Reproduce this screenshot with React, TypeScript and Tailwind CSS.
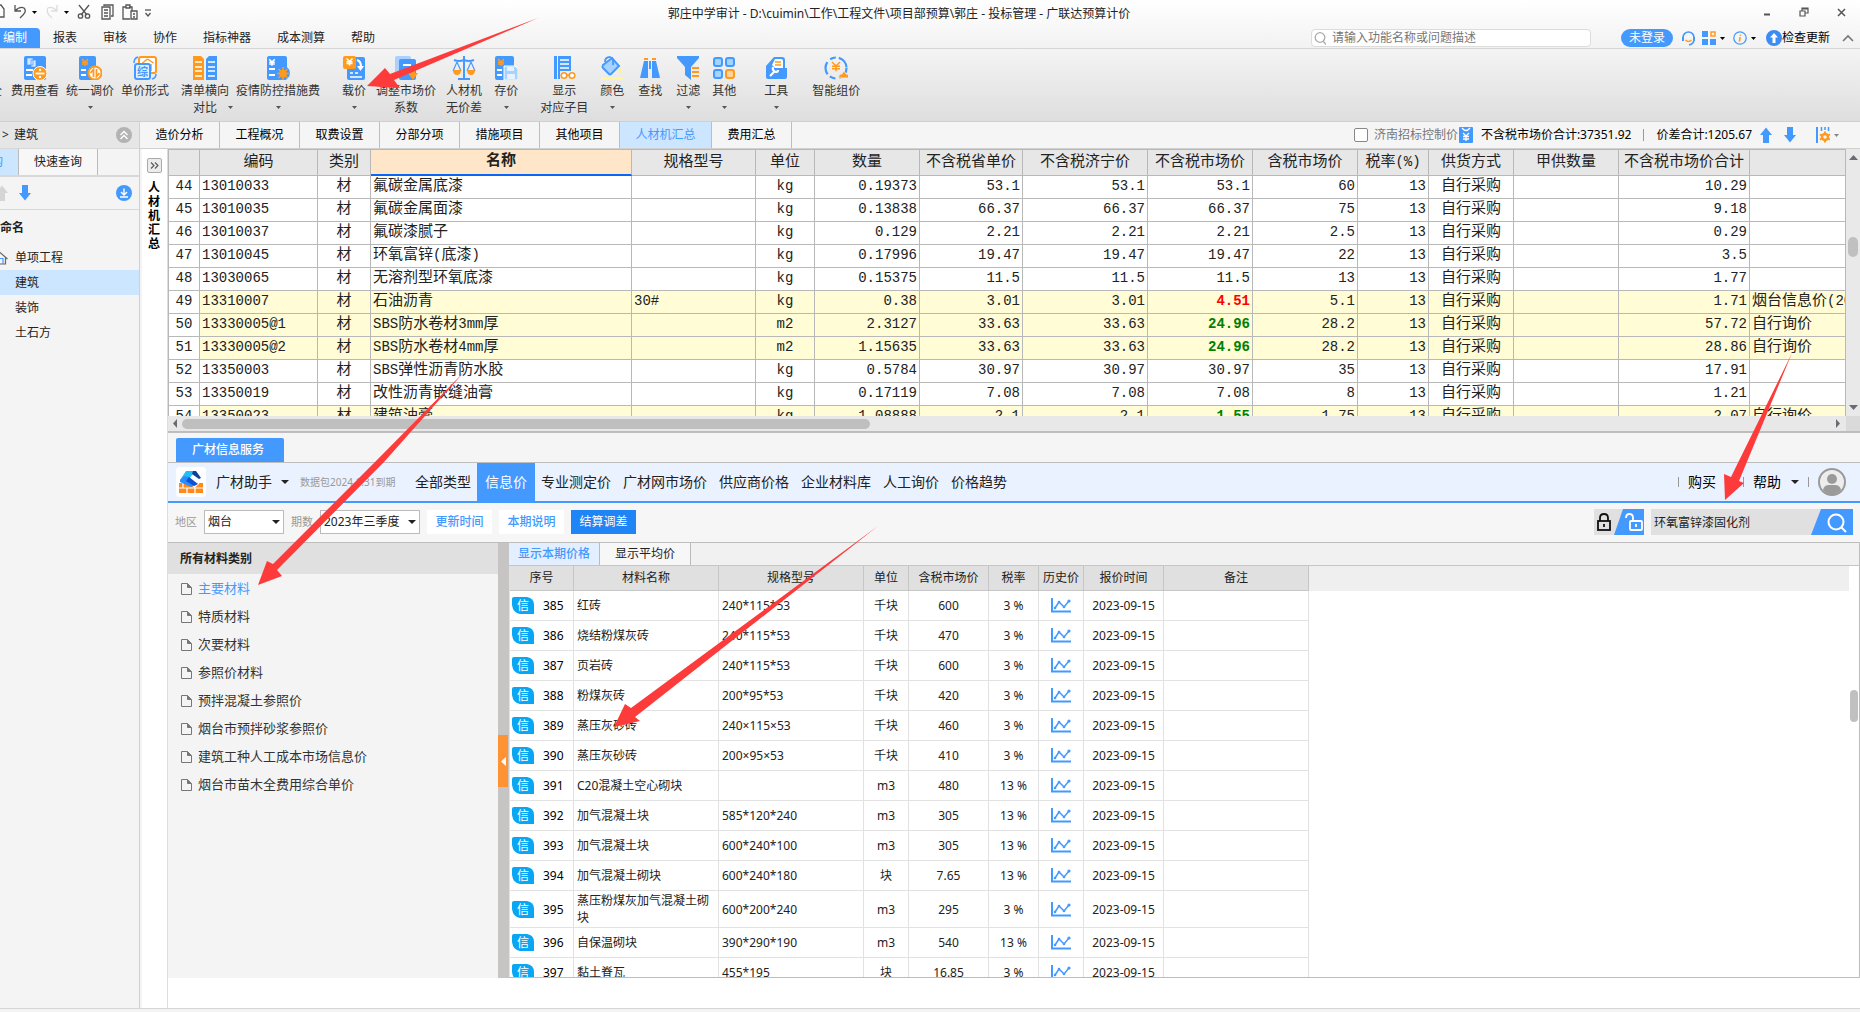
import React, { useState } from 'react';
import clsx from 'clsx';

const BLUE = '#4499ff';
const ORANGE = '#ff9a1f';

/* ---------- data ---------- */

const MENUS = ['报表', '审核', '协作', '指标神器', '成本测算', '帮助'];

const PAGE_TABS = ['造价分析', '工程概况', '取费设置', '分部分项', '措施项目', '其他项目', '人材机汇总', '费用汇总'];

const PROJECT_TREE = ['单项工程', '建筑', '装饰', '土石方'];

const SUMMARY_COLUMNS = [
    { title: '', width: 31, align: 'text-center' },
    { title: '编码', width: 118, align: 'text-left' },
    { title: '类别', width: 53, align: 'text-center' },
    { title: '名称', width: 261, align: 'text-left' },
    { title: '规格型号', width: 124, align: 'text-left' },
    { title: '单位', width: 59, align: 'text-center' },
    { title: '数量', width: 105, align: 'text-right' },
    { title: '不含税省单价', width: 103, align: 'text-right' },
    { title: '不含税济宁价', width: 125, align: 'text-right' },
    { title: '不含税市场价', width: 105, align: 'text-right' },
    { title: '含税市场价', width: 105, align: 'text-right' },
    { title: '税率(%)', width: 71, align: 'text-right' },
    { title: '供货方式', width: 85, align: 'text-center' },
    { title: '甲供数量', width: 105, align: 'text-right' },
    { title: '不含税市场价合计', width: 131, align: 'text-right' },
    { title: '', width: 0, align: 'text-left' },
];

interface SummaryRow {
    cells: string[];
    marked?: boolean;
    trend?: 'up' | 'down';
}

const SUMMARY_ROWS: SummaryRow[] = [
    { cells: ['44', '13010033', '材', '氟碳金属底漆', '', 'kg', '0.19373', '53.1', '53.1', '53.1', '60', '13', '自行采购', '', '10.29', ''] },
    { cells: ['45', '13010035', '材', '氟碳金属面漆', '', 'kg', '0.13838', '66.37', '66.37', '66.37', '75', '13', '自行采购', '', '9.18', ''] },
    { cells: ['46', '13010037', '材', '氟碳漆腻子', '', 'kg', '0.129', '2.21', '2.21', '2.21', '2.5', '13', '自行采购', '', '0.29', ''] },
    { cells: ['47', '13010045', '材', '环氧富锌(底漆)', '', 'kg', '0.17996', '19.47', '19.47', '19.47', '22', '13', '自行采购', '', '3.5', ''] },
    { cells: ['48', '13030065', '材', '无溶剂型环氧底漆', '', 'kg', '0.15375', '11.5', '11.5', '11.5', '13', '13', '自行采购', '', '1.77', ''] },
    { cells: ['49', '13310007', '材', '石油沥青', '30#', 'kg', '0.38', '3.01', '3.01', '4.51', '5.1', '13', '自行采购', '', '1.71', '烟台信息价(2023年'], marked: true, trend: 'up' },
    { cells: ['50', '13330005@1', '材', 'SBS防水卷材3mm厚', '', 'm2', '2.3127', '33.63', '33.63', '24.96', '28.2', '13', '自行采购', '', '57.72', '自行询价'], marked: true, trend: 'down' },
    { cells: ['51', '13330005@2', '材', 'SBS防水卷材4mm厚', '', 'm2', '1.15635', '33.63', '33.63', '24.96', '28.2', '13', '自行采购', '', '28.86', '自行询价'], marked: true, trend: 'down' },
    { cells: ['52', '13350003', '材', 'SBS弹性沥青防水胶', '', 'kg', '0.5784', '30.97', '30.97', '30.97', '35', '13', '自行采购', '', '17.91', ''] },
    { cells: ['53', '13350019', '材', '改性沥青嵌缝油膏', '', 'kg', '0.17119', '7.08', '7.08', '7.08', '8', '13', '自行采购', '', '1.21', ''] },
    { cells: ['54', '13350023', '材', '建筑油膏', '', 'kg', '1.08888', '2.1', '2.1', '1.55', '1.75', '13', '自行采购', '', '2.07', '自行询价'], marked: true, trend: 'down' },
];

const PRICE_NAV = ['全部类型', '信息价', '专业测定价', '广材网市场价', '供应商价格', '企业材料库', '人工询价', '价格趋势'];

const CATEGORIES = [
    '主要材料',
    '特质材料',
    '次要材料',
    '参照价材料',
    '预拌混凝土参照价',
    '烟台市预拌砂浆参照价',
    '建筑工种人工成本市场信息价',
    '烟台市苗木全费用综合单价',
];

const PRICE_COLUMNS = [
    { title: '序号', width: 64 },
    { title: '材料名称', width: 145 },
    { title: '规格型号', width: 145 },
    { title: '单位', width: 45 },
    { title: '含税市场价', width: 80 },
    { title: '税率', width: 50 },
    { title: '历史价', width: 45 },
    { title: '报价时间', width: 80 },
    { title: '备注', width: 145 },
];

const PRICE_ROWS = [
    { id: 385, name: '红砖', spec: '240*115*53', unit: '千块', price: '600', tax: '3 %' },
    { id: 386, name: '烧结粉煤灰砖', spec: '240*115*53', unit: '千块', price: '470', tax: '3 %' },
    { id: 387, name: '页岩砖', spec: '240*115*53', unit: '千块', price: '600', tax: '3 %' },
    { id: 388, name: '粉煤灰砖', spec: '200*95*53', unit: '千块', price: '420', tax: '3 %' },
    { id: 389, name: '蒸压灰砂砖', spec: '240×115×53', unit: '千块', price: '460', tax: '3 %' },
    { id: 390, name: '蒸压灰砂砖', spec: '200×95×53', unit: '千块', price: '410', tax: '3 %' },
    { id: 391, name: 'C20混凝土空心砌块', spec: '', unit: 'm3', price: '480', tax: '13 %' },
    { id: 392, name: '加气混凝土块', spec: '585*120*240', unit: 'm3', price: '305', tax: '13 %' },
    { id: 393, name: '加气混凝土块', spec: '600*240*100', unit: 'm3', price: '305', tax: '13 %' },
    { id: 394, name: '加气混凝土砌块', spec: '600*240*180', unit: '块', price: '7.65', tax: '13 %' },
    { id: 395, name: '蒸压粉煤灰加气混凝土砌块', spec: '600*200*240', unit: 'm3', price: '295', tax: '3 %' },
    { id: 396, name: '自保温砌块', spec: '390*290*190', unit: 'm3', price: '540', tax: '13 %' },
    { id: 397, name: '黏土脊瓦', spec: '455*195', unit: '块', price: '16.85', tax: '3 %' },
];

/* ---------- small icons ---------- */

function Caret({ className = 'text-black', size = 5 }: { className?: string; size?: number }) {
    return (
        <svg width={size} height={Math.ceil(size / 2)} viewBox="0 0 10 5" preserveAspectRatio="none" className={clsx('shrink-0', className)}>
            <path d="M0 0h10L5 5z" fill="currentColor" />
        </svg>
    );
}

function BlockArrow({ color = BLUE, up = false }: { color?: string; up?: boolean }) {
    return (
        <svg width="12" height="16" viewBox="0 0 12 16" className={clsx('shrink-0', up && 'rotate-180')}>
            <path d="M3 0h6v8h3l-6 7.5L0 8h3z" fill={color} />
        </svg>
    );
}

function PageIcon() {
    return (
        <svg width="11" height="12" viewBox="0 0 11 12" fill="none" stroke="#777" className="shrink-0">
            <path d="M.5.5h6l4 4v7H.5z" />
            <path d="M6.5.5v4h4" fill="#777" />
        </svg>
    );
}

function InfoBadge() {
    return (
        <svg width="22" height="17" viewBox="0 0 22 17" className="shrink-0">
            <path d="M2 0h13q7 1 7 8v9H8Q1 16 0 8V2q0-2 2-2z" fill="#08a6f3" />
            <text x="11" y="13" fontSize="12" textAnchor="middle" fill="#fff" fontFamily="'Noto Sans CJK SC', sans-serif">信</text>
        </svg>
    );
}

function TrendIcon() {
    return (
        <svg width="20" height="15" viewBox="0 0 20 15" fill="none" stroke={BLUE} className="mx-auto block">
            <path d="M1 0v13.6h19" strokeWidth="2" />
            <path d="M4 10l4-6 5 5 5-6" strokeWidth="1.5" />
            <g fill={BLUE} stroke="none">
                <circle cx="4" cy="10" r="1.3" />
                <circle cx="8" cy="4" r="1.3" />
                <circle cx="13" cy="9" r="1.3" />
                <circle cx="18" cy="3" r="1.6" />
            </g>
        </svg>
    );
}

/* ---------- ribbon icons ---------- */

const yen = (x: number, y: number, s: number, color: string) => (
    <path
        d={`M${x - s} ${y - s}l${s} ${s}l${s} ${-s}M${x} ${y}v${s * 1.3}M${x - s} ${y + 0.2}h${s * 2}M${x - s} ${y + s * 0.7}h${s * 2}`}
        stroke={color}
        strokeWidth="1.5"
        fill="none"
    />
);

const ICONS: Record<string, React.ReactNode> = {
    fee: (
        <>
            <rect x="1" y="0" width="22" height="24" rx="2" fill={BLUE} />
            <path d="M4 2h6v7H4zM8 4h5v7H8z" fill="#d7e9ff" stroke={BLUE} strokeWidth=".7" />
            <path d="M3 14h7M3 19h6" stroke="#fff" strokeWidth="2" />
            <circle cx="17" cy="17.5" r="7" fill={ORANGE} stroke="#fff" />
            <path d="M12.5 17.5h9" stroke="#fff" strokeWidth="1.8" />
            <circle cx="17" cy="14" r="1.2" fill="#fff" />
            <circle cx="17" cy="21" r="1.2" fill="#fff" />
        </>
    ),
    unify: (
        <>
            <rect x="1" y="0" width="17" height="24" rx="2" fill={BLUE} />
            {yen(7, 6, 3, ORANGE)}
            <path d="M3 14h5M3 19h5" stroke="#fff" strokeWidth="2" />
            <circle cx="17" cy="17" r="6.5" fill="#fff" stroke={ORANGE} strokeWidth="2" />
            <path d="M15.5 21v-7.5l-3 3.5M18.5 13v7.5l3-3.5" stroke={ORANGE} strokeWidth="1.8" fill="none" />
        </>
    ),
    form: (
        <>
            <rect x="6" y="1" width="17" height="16" rx="2" fill="#fff" stroke={ORANGE} strokeWidth="2" />
            <path d="M14.5 3l6 4M14.5 3l-5 4M18 8v7" stroke={ORANGE} strokeWidth="1.5" />
            <path d="M1 7q0-5 4-6M23 18q0 4-4 5" stroke={BLUE} strokeWidth="1.5" fill="none" />
            <rect x="2" y="8" width="15" height="15" rx="2" fill="#e3f0ff" stroke={BLUE} strokeWidth="2" />
            <text x="9.5" y="20" fontSize="11" fontWeight="700" textAnchor="middle" fill={BLUE} fontFamily="'Noto Sans CJK SC', sans-serif">综</text>
        </>
    ),
    compare: (
        <>
            <path d="M0 0h8l3 3v21H0z" fill={ORANGE} />
            <path d="M24 0h-8l-3 3v21h11z" fill={BLUE} />
            <path d="M2 6h7M2 11h7M2 15h7M2 20h7M15 6h7M15 11h7M15 15h7M15 20h7" stroke="#fff" strokeWidth="1.5" />
        </>
    ),
    virus: (
        <>
            <rect x="1" y="0" width="20" height="24" rx="2" fill={BLUE} />
            {yen(6, 6, 2.8, '#fff')}
            <path d="M3 13h6M3 19h6" stroke="#fff" strokeWidth="2" />
            <circle cx="17" cy="17" r="7" fill={BLUE} />
            <circle cx="17" cy="17.5" r="3.8" fill={ORANGE} />
            <path d="M17 11v13M11 17.5h12.5M12.5 13l9 9M21.5 13l-9 9" stroke={ORANGE} strokeWidth="1.6" />
        </>
    ),
    load: (
        <>
            <path d="M13 1h8q2 0 2 2v19q0 2-2 2H7q-2 0-2-2v-9z" fill={BLUE} />
            <rect x="1" y="0" width="13" height="13" rx="2" fill={ORANGE} />
            {yen(7.5, 5.5, 3, '#fff')}
            <path d="M15 4q4 1 4 7" stroke="#fff" strokeWidth="2.2" fill="none" />
            <path d="M15 10h7l-3.5 5z" fill="#fff" />
            <path d="M8 17h3M8 21h12M13 17h3" stroke="#fff" strokeWidth="1.5" />
        </>
    ),
    adjust: (
        <>
            <rect x="1" y="0" width="16" height="19" rx="2" fill="#a9d0ff" />
            <rect x="5" y="3" width="17" height="21" rx="2" fill={BLUE} />
            <path d="M9 9h8M9 14h6" stroke="#fff" strokeWidth="2" />
            <path d="M17 12h4v5h3l-5 7-5-7h3z" fill={ORANGE} />
        </>
    ),
    scale: (
        <>
            <path d="M12 0v22M2 4q5 2 10 0 5 2 10 0M6 23h12" stroke={BLUE} strokeWidth="2" fill="none" />
            <path d="M5 6l-4 9M5 6l4 9M19 6l-4 9M19 6l4 9" stroke={BLUE} strokeWidth="1.2" />
            <path d="M1 14h8q0 5-4 5t-4-5zM15 14h8q0 5-4 5t-4-5z" fill={ORANGE} />
        </>
    ),
    save: (
        <>
            <rect x="1" y="0" width="19" height="24" rx="2" fill={BLUE} />
            {yen(7, 6, 3, ORANGE)}
            <path d="M3 14h5M3 19h5" stroke="#fff" strokeWidth="2" />
            <path d="M10 10h11l3 3v11H10z" fill="#a5d2ff" stroke="#fff" />
            <path d="M13 11h7v4h-7zM13 18h8v5h-8z" fill="#e6f3ff" />
        </>
    ),
    show: (
        <>
            <path d="M2 0h3v23H2zM6 0h13v15H8v8H6z" fill={BLUE} />
            <path d="M8 4h9M8 8h9M8 12h9" stroke="#fff" strokeWidth="1.5" />
            <circle cx="12" cy="19.5" r="2.8" fill="#fff" stroke={ORANGE} strokeWidth="1.6" />
            <circle cx="20" cy="19.5" r="2.8" fill="#fff" stroke={ORANGE} strokeWidth="1.6" />
            <path d="M15 19h2" stroke={ORANGE} strokeWidth="1.5" />
        </>
    ),
    color: (
        <>
            <path d="M3 9l9-7 7 8-8 8q-1 1-2 0l-6-6q-1-1 0-3z" fill="#a5d2ff" stroke={BLUE} strokeWidth="2" />
            <path d="M5 6q0-5 5-5 4 1 3 8" stroke={BLUE} strokeWidth="1.8" fill="none" />
            <path d="M20 11q3 5 0 6-3-1 0-6z" fill="#fff38a" />
            <rect x="1" y="21" width="22" height="3" fill="#fff59a" />
        </>
    ),
    find: (
        <>
            <path d="M6 3h4M14 3h4" stroke={ORANGE} strokeWidth="2" />
            <path d="M6 5h4v17H2zM14 5h4l4 17h-8z" fill={BLUE} />
            <path d="M11 5h2v8h-2z" fill={BLUE} />
        </>
    ),
    filter: (
        <>
            <path d="M1 0h22v2l-8 9v13l-6-5v-8L1 2z" fill={BLUE} />
            <path d="M15 11h9v12h-9z" fill="#ececec" />
            <path d="M16 12h7M16 16h7M16 20h7" stroke={ORANGE} strokeWidth="2" />
        </>
    ),
    other: (
        <>
            <g fill="#a5d2ff" stroke={BLUE} strokeWidth="2">
                <rect x="2" y="2" width="8" height="8" rx="2" />
                <rect x="14" y="2" width="8" height="8" rx="2" />
                <rect x="2" y="14" width="8" height="8" rx="2" />
            </g>
            <rect x="14" y="14" width="8" height="8" rx="2" fill="#ffd39b" stroke={ORANGE} strokeWidth="2" />
        </>
    ),
    tool: (
        <>
            <path d="M2 10l8-9h8q3 0 3 3v8h2v9q0 2-2 2H4q-2 0-2-2z" fill={BLUE} />
            <path d="M11 3h6q2 0 2 2v7h-8l-3-3z" fill="#fff" />
            <path d="M11 6h6M11 9h6" stroke={ORANGE} strokeWidth="1.5" />
            <path d="M6 20l5-5M9 11q-1 4 3 5 2 0 2-2" stroke="#fff" strokeWidth="2.2" fill="none" />
        </>
    ),
    smart: (
        <>
            <circle cx="12" cy="12" r="10.5" fill="none" stroke={BLUE} strokeWidth="2.2" strokeDasharray="13 4 6 3" />
            {yen(12, 10, 4, ORANGE)}
            <path d="M15 22q-1-4 3-4 2-5 4 0 4 0 3 4z" fill={ORANGE} stroke="#e8e8e8" strokeWidth=".8" />
        </>
    ),
};

interface RibbonItem {
    icon: string;
    label: string;
    second?: string;
    caret?: boolean;
    gap: string;
}

const RIBBON: RibbonItem[] = [
    { icon: 'fee', label: '费用查看', gap: 'ml-2' },
    { icon: 'unify', label: '统一调价', caret: true, gap: 'ml-[7px]' },
    { icon: 'form', label: '单价形式', gap: 'ml-[7px]' },
    { icon: 'compare', label: '清单横向', second: '对比', caret: true, gap: 'ml-3' },
    { icon: 'virus', label: '疫情防控措施费', caret: true, gap: 'ml-[7px]' },
    { icon: 'load', label: '载价', caret: true, gap: 'ml-[22px]' },
    { icon: 'adjust', label: '调整市场价', second: '系数', gap: 'ml-2.5' },
    { icon: 'scale', label: '人材机', second: '无价差', gap: 'ml-2.5' },
    { icon: 'save', label: '存价', caret: true, gap: 'ml-3' },
    { icon: 'show', label: '显示', second: '对应子目', gap: 'ml-[22px]' },
    { icon: 'color', label: '颜色', caret: true, gap: 'ml-3' },
    { icon: 'find', label: '查找', gap: 'ml-3.5' },
    { icon: 'filter', label: '过滤', caret: true, gap: 'ml-3.5' },
    { icon: 'other', label: '其他', caret: true, gap: 'ml-3' },
    { icon: 'tool', label: '工具', caret: true, gap: 'ml-7' },
    { icon: 'smart', label: '智能组价', gap: 'ml-6' },
];

/* ---------- sections ---------- */

function TitleBar() {
    return (
        <div className="flex h-7 items-start justify-between">
            <div className="flex flex-1 items-center pt-0.5">
                <svg width="160" height="20" viewBox="0 0 160 20" fill="none" stroke="#555" strokeWidth="1.3">
                    <path d="M-4 3h5l3 4v8h-8" />
                    <path d="M15 3v6h6M15 9q5-5 9-3 3 3-1 7l-3 3" />
                    <path d="M32 9h5l-2.500 3z" fill="#000" stroke="none" />
                    <g stroke="#ddd">
                        <path d="M57 3v6h-6M57 9q-5-5-9-3-2 3 1 7l3 3" />
                    </g>
                    <path d="M64 9h5l-2.500 3z" fill="#000" stroke="none" />
                    <path d="M79 3l8 10M89 3l-8 10" />
                    <circle cx="80.5" cy="14" r="2.2" />
                    <circle cx="87.5" cy="14" r="2.2" />
                    <path d="M104 4v-1h9v11h-2M102 5h8v12h-8zM104 8h4M104 11h4M104 14h4" />
                    <path d="M126 5h-3v12h7M132 9V5h-3M126 3h4v3h-4zM131 9h6v8h-6zM133 12h2M133 15h2" />
                    <path d="M145 8h6" />
                    <path d="M145.500 11l2.500 3 2.500-3" />
                </svg>
            </div>
            <h1 className="pt-1.5 text-xs text-[#222]">郭庄中学审计 - D:\cuimin\工作\工程文件\项目部预算\郭庄 - 投标管理 - 广联达预算计价</h1>
            <div className="flex flex-1 items-center justify-end gap-7 pl-12 pr-3.5 pt-[7px] text-[#555]">
                <button aria-label="最小化">
                    <svg width="8" height="10" viewBox="0 0 8 10"><path d="M1 7.500h6" stroke="currentColor" strokeWidth="2" /></svg>
                </button>
                <button aria-label="还原">
                    <svg width="10" height="10" viewBox="0 0 10 10" fill="none" stroke="currentColor" strokeWidth="1.2"><path d="M1 4h5v5H1zM3 4V1h6v5H6M3 2h6" /></svg>
                </button>
                <button aria-label="关闭">
                    <svg width="9" height="9" viewBox="0 0 9 9" stroke="currentColor" strokeWidth="1.5"><path d="M1 1l7 7M8 1L1 8" /></svg>
                </button>
            </div>
        </div>
    );
}

function MenuBar() {
    return (
        <nav className="flex h-5 items-center justify-between text-xs">
            <div className="flex items-center">
                <button className="h-5 w-10 rounded-tr bg-[#4499ff] pl-[3px] text-left text-white">编制</button>
                {MENUS.map(m => (
                    <button key={m} className="px-[13px] text-[#222]">{m}</button>
                ))}
            </div>
            <div className="flex items-center pr-1.5">
                <label className="flex h-[18px] w-[280px] items-center gap-1.5 rounded-sm border border-[#dcdcdc] bg-white px-0.5">
                    <svg width="12" height="13" viewBox="0 0 12 13" fill="none" stroke="#aaa" strokeWidth="1.3">
                        <circle cx="6" cy="5.5" r="4.8" />
                        <path d="M9 9l3 3.500" />
                    </svg>
                    <input aria-label="功能搜索" placeholder="请输入功能名称或问题描述" className="min-w-0 flex-1 text-xs outline-none placeholder:text-[#777]" />
                </label>
                <button className="ml-[30px] h-[18px] w-[52px] rounded-full bg-[#4499ff] leading-[18px] text-white">未登录</button>
                <svg width="15" height="15" viewBox="0 0 15 15" fill="none" className="ml-2">
                    <path d="M2 8V6.500a5.500 5.500 0 0 1 11 0V8q0 5-5 6" stroke={BLUE} strokeWidth="1.6" />
                    <path d="M1 6h2v4H1zM12 6h2v4h-2z" fill={BLUE} />
                    <path d="M4.500 9q3 3 6 0" stroke={ORANGE} strokeWidth="1.5" />
                </svg>
                <svg width="14" height="14" viewBox="0 0 14 14" className="ml-1.5">
                    <path d="M0 0h6v6H0zM0 8h6v6H0zM8 8h6v6H8z" fill={BLUE} />
                    <path d="M9 1h4v4H9z" fill="none" stroke={ORANGE} strokeWidth="1.5" />
                </svg>
                <span className="ml-1"><Caret /></span>
                <svg width="14" height="14" viewBox="0 0 14 14" fill="none" className="ml-2">
                    <circle cx="7" cy="7" r="6.2" stroke={BLUE} strokeWidth="1.3" />
                    <path d="M7.500 3.500v1.200M7.200 6l-.8 4.500" stroke={ORANGE} strokeWidth="1.6" />
                </svg>
                <span className="ml-1"><Caret /></span>
                <button className="ml-2.5 flex items-center">
                    <svg width="16" height="18" viewBox="0 0 16 18">
                        <circle cx="8" cy="9" r="8" fill="#3b8cf5" />
                        <path d="M8 4l4 4.500H9.500V14h-3V8.500H4z" fill="#fff" />
                    </svg>
                    检查更新
                </button>
                <svg width="12" height="8" viewBox="0 0 12 8" fill="none" stroke="#777" strokeWidth="1.6" className="ml-3">
                    <path d="M1 7l5-5 5 5" />
                </svg>
            </div>
        </nav>
    );
}

function Ribbon() {
    return (
        <div className="flex h-[73px] items-start border-b border-[#cfcfcf] bg-linear-to-b from-[#f4f4f4] to-[#dedede] pt-[7px] text-xs text-[#333]">
            <span className="mt-[26px] flex w-[3px] justify-end overflow-hidden pr-px leading-[17px]">全</span>
            {RIBBON.map(item => (
                <button key={item.icon} className={clsx('flex shrink-0 flex-col items-center', item.gap)}>
                    <svg width="24" height="24" viewBox="0 0 24 24">{ICONS[item.icon]}</svg>
                    <span className="mt-0.5 leading-[17px]">{item.label}</span>
                    <span className="relative flex h-[17px] items-center leading-[17px]">
                        {item.second}
                        {item.caret && (
                            <span className={item.second ? 'absolute -right-4 top-[7px]' : ''}>
                                <Caret className="text-[#555]" />
                            </span>
                        )}
                    </span>
                </button>
            ))}
        </div>
    );
}

function Sidebar() {
    const [current, setCurrent] = useState('建筑');

    return (
        <aside className="flex w-[140px] shrink-0 flex-col border-r border-[#d0d0d0] bg-[#f4f4f4] text-xs text-[#222]">
            <div className="flex h-[27px] items-center border-b border-[#d8d8d8] bg-[#e6e6e6] pl-0.5 pr-[7px]">
                <span className="w-3">&gt;</span>
                <span className="flex-1">建筑</span>
                <svg width="16" height="16" viewBox="0 0 16 16" fill="none">
                    <circle cx="8" cy="8" r="8" fill="#b3b3b3" />
                    <path d="M4.500 8L8 4.500 11.500 8M4.500 12L8 8.500l3.500 3.500" stroke="#fff" strokeWidth="1.3" />
                </svg>
            </div>
            <div className="flex h-7 border-b-2 border-[#d8d8d8]">
                <button aria-label="项目结构" className="w-[19px] border-r border-[#bbb] bg-[#cce6ff] text-[#4499ff]">
                    <span className="flex w-[3px] justify-end overflow-hidden">构</span>
                </button>
                <button className="w-[79px] border-r border-[#bbb] bg-[#f7f7f7]">快速查询</button>
            </div>
            <div className="flex h-[33px] items-center border-b border-[#d8d8d8] pr-[7px]">
                <span className="flex w-[19px] justify-start overflow-hidden">
                    <svg width="8" height="16" viewBox="4 0 8 16"><path d="M3 16h6V8h3L6 .5 0 8h3z" fill="#d5d5d5" /></svg>
                </span>
                <BlockArrow />
                <svg width="16" height="16" viewBox="0 0 16 16" fill="none" className="ml-auto">
                    <circle cx="8" cy="8" r="8" fill={BLUE} />
                    <path d="M8 3.500v6M5 7l3 3 3-3M4 12h8" stroke="#fff" strokeWidth="1.4" />
                </svg>
            </div>
            <p className="flex h-[35px] items-center font-bold">命名</p>
            <ul>
                {PROJECT_TREE.map((name, i) => (
                    <li key={name}>
                        <button
                            onClick={() => setCurrent(name)}
                            className={clsx('flex h-[25px] w-full items-center', current === name && 'bg-[#cce6ff]')}
                        >
                            <span className="w-[15px]">
                                {i === 0 && (
                                    <svg width="8" height="14" viewBox="6 0 8 14" fill="none" stroke="#666">
                                        <path d="M5.500 1l8 7M11.500 6.500V13H5" strokeWidth="1.2" />
                                        <path d="M6 7.500h3V13" stroke={BLUE} strokeWidth="1.2" />
                                    </svg>
                                )}
                            </span>
                            {name}
                        </button>
                    </li>
                ))}
            </ul>
        </aside>
    );
}

function PageTabs() {
    const [tab, setTab] = useState('人材机汇总');

    return (
        <div className="flex h-[27px] items-stretch border-b border-[#d0d0d0] bg-[#f5f5f5] text-xs">
            {PAGE_TABS.map(name => (
                <button
                    key={name}
                    onClick={() => setTab(name)}
                    className={clsx(
                        'border-r border-[#bdbdbd]',
                        name.length > 4 ? 'w-[92px]' : 'w-20',
                        tab === name ? 'bg-[#cce6ff] text-[#4499ff]' : 'text-black'
                    )}
                >
                    {name}
                </button>
            ))}
            <div className="ml-auto flex items-center pr-[21px] text-black">
                <label className="flex items-center gap-1.5 text-[#777]">
                    <input type="checkbox" className="size-3.5 appearance-none rounded-xs border border-[#888] bg-white" />
                    济南招标控制价
                </label>
                <svg width="14" height="16" viewBox="0 0 14 16" fill="none" className="ml-px">
                    <rect width="14" height="16" rx="1" fill={BLUE} />
                    <path d="M3 1q4 5 8 0M4 6l3 3 3-3M7 9v5M4 9.500h6M4 12h6" stroke="#fff" strokeWidth="1.3" />
                </svg>
                <span className="ml-2">不含税市场价合计:37351.92</span>
                <span className="mx-3 h-3 w-px bg-[#7d9fc8]" />
                <span className="mr-2">价差合计:1205.67</span>
                <button aria-label="上移"><BlockArrow up /></button>
                <button aria-label="下移" className="ml-3"><BlockArrow /></button>
                <svg width="14" height="16" viewBox="0 0 14 16" fill="none" className="ml-5">
                    <path d="M1 0v16" stroke={BLUE} strokeWidth="2" />
                    <path d="M5.500 0v4M9 0v3M12.500 0v4" stroke={BLUE} strokeWidth="1.5" />
                    <circle cx="9" cy="10" r="3" stroke={ORANGE} strokeWidth="2.5" />
                    <path d="M9 4.500v2M9 13.500v2M4 7.500l2 1M12 11.500l2 1M4 12.500l2-1M12 8.500l2-1" stroke={ORANGE} strokeWidth="2" />
                </svg>
                <span className="ml-1"><Caret className="text-[#888]" /></span>
            </div>
        </div>
    );
}

/* Latin letters and digits run a size smaller than the Chinese text beside them */
function MixedText({ text }: { text: string }) {
    return (
        <>
            {text.split(/([\x20-\x7e]+)/).map((part, i) =>
                i % 2 ? <span key={i} className="text-sm leading-none">{part}</span> : part
            )}
        </>
    );
}

function SummaryTable() {
    return (
        <section className="border-b-2 border-[#bdbdbd]">
            <div className="flex h-[267px]">
                <div className="min-w-0 flex-1 overflow-hidden">
                    <table className="w-full table-fixed border-separate border-spacing-0 border-l border-[#b8b8b8] font-['Liberation_Mono','Noto_Sans_CJK_SC',monospace] text-[15px] text-[#222]">
                        <colgroup>
                            {SUMMARY_COLUMNS.map((c, i) => (
                                <col key={i} style={c.width ? { width: c.width } : undefined} />
                            ))}
                        </colgroup>
                        <thead>
                            <tr className="h-[27px]">
                                {SUMMARY_COLUMNS.map((c, i) => (
                                    <th
                                        key={i}
                                        className={clsx(
                                            'truncate border-r border-t border-[#b8b8b8] p-0 leading-6',
                                            c.title === '名称'
                                                ? 'border-b-2 border-b-[#0a66f5] bg-[#ffe6c8] font-bold'
                                                : 'border-b bg-[#e7e7e7] font-normal'
                                        )}
                                    >
                                        <MixedText text={c.title} />
                                    </th>
                                ))}
                            </tr>
                        </thead>
                        <tbody>
                            {SUMMARY_ROWS.map(row => (
                                <tr key={row.cells[0]} className="h-[23px]">
                                    {row.cells.map((text, i) => (
                                        <td
                                            key={i}
                                            className={clsx(
                                                'overflow-hidden whitespace-nowrap border-b border-r border-[#b8b8b8] px-0.5 py-0 leading-[22px]',
                                                SUMMARY_COLUMNS[i].align,
                                                row.marked && i > 0 && 'bg-[#fffcd6]',
                                                i === 9 && row.trend && 'font-bold',
                                                i === 9 && row.trend === 'up' && 'text-[#ff0000]',
                                                i === 9 && row.trend === 'down' && 'text-[#008000]'
                                            )}
                                        >
                                            <MixedText text={text} />
                                        </td>
                                    ))}
                                </tr>
                            ))}
                        </tbody>
                    </table>
                </div>
                <div className="flex w-3.5 flex-col items-center justify-between bg-[#e9e9e9] py-1.5">
                    <span className="rotate-180"><Caret size={9} className="text-[#6b6b73]" /></span>
                    <span className="-mt-[72px] h-5 w-2.5 rounded-full bg-[#c0c0c0]" />
                    <Caret size={9} className="text-[#6b6b73]" />
                </div>
            </div>
            <div className="flex h-[15px] items-center bg-[#e8e8e8]">
                <svg width="14" height="9" viewBox="0 0 14 9"><path d="M9 0v9L5 4.500z" fill="#6b6b73" /></svg>
                <div className="flex-1">
                    <div className="h-2.5 w-5/12 rounded-full bg-[#bfbfbf]" />
                </div>
                <svg width="14" height="9" viewBox="0 0 14 9"><path d="M4 0v9l4-4.500z" fill="#6b6b73" /></svg>
                <div className="h-full w-3.5 bg-[#dadada]" />
            </div>
        </section>
    );
}

function AssistantBar() {
    const [nav, setNav] = useState('信息价');

    return (
        <div className="flex h-[41px] items-stretch border-b-2 border-t border-b-[#4499ff] border-t-[#bdbdbd] bg-[#ebf2ff] pl-2 pr-3.5 text-sm text-[#222]">
            <span className="flex items-center">
                <span className="flex size-[30px] items-center justify-center rounded bg-white">
                    <svg width="26" height="24" viewBox="0 0 26 24">
                        <path d="M1 13h24v10H1z" fill="#ff8a1c" />
                        <path d="M1 18h24M9 18v5M17 18v5M5 13v5" stroke="#fff" strokeWidth="1.2" />
                        <path d="M5 9h16v4l-5 4-6-4H5z" fill="#fff" />
                        <path d="M13 13l3.500 4 4.500-4" stroke="#fff" strokeWidth="1.5" fill="#ff8a1c" />
                        <path d="M8 1h9l-6 8-3 5-6-4z" fill="#1ec0f7" />
                        <path d="M2 10l4-4 5 1 6 8-4 2-11-5z" fill="#2b8cff" />
                        <path d="M11 7l9 7-4 2-8-5z" fill="#0d52d6" />
                        <path d="M15 1h3l5 7-2 1-7-5z" fill="#0e3f9a" />
                    </svg>
                </span>
                <button className="ml-2.5 flex items-center gap-[9px]">
                    广材助手
                    <Caret size={8} className="text-[#222]" />
                </button>
                <span className="ml-[11px] w-[109px] text-[10px] text-[#999]">数据包2024.1.31到期</span>
            </span>
            <div className="flex">
                {PRICE_NAV.map(name => (
                    <button
                        key={name}
                        onClick={() => setNav(name)}
                        className={clsx(name === '信息价' ? 'px-2' : 'px-1.5', nav === name && 'bg-[#4499ff] text-white')}
                    >
                        {name}
                    </button>
                ))}
            </div>
            <div className="ml-auto flex items-center gap-[9px] text-black">
                <span className="h-2.5 w-px bg-[#999]" />
                <button className="flex items-center gap-2.5">购买<Caret size={8} className="text-[#222]" /></button>
                <span className="h-2.5 w-px bg-[#999]" />
                <button className="flex items-center gap-2.5">帮助<Caret size={8} className="text-[#222]" /></button>
                <span className="h-2.5 w-px bg-[#999]" />
                <svg width="28" height="28" viewBox="0 0 28 28">
                    <circle cx="14" cy="14" r="13" fill="#ededed" stroke="#9a9a9a" strokeWidth="2" />
                    <circle cx="14" cy="11" r="5" fill="#9a9a9a" />
                    <path d="M5 22q1-5 6-5h6q5 0 6 5-4 4.500-9 4.500T5 22z" fill="#9a9a9a" />
                </svg>
            </div>
        </div>
    );
}

function Picker({ label, value, width }: { label: string; value: string; width: string }) {
    return (
        <label className="flex items-center gap-[7px] text-[11px] text-[#999]">
            {label}
            <span className={clsx('relative block', width)}>
                <select className="h-6 w-full appearance-none border border-[#bbb] bg-white pl-[3px] text-xs text-[#222]">
                    <option>{value}</option>
                </select>
                <span className="pointer-events-none absolute right-1 top-2.5">
                    <Caret size={8} className="text-[#222]" />
                </span>
            </span>
        </label>
    );
}

function FilterBar() {
    return (
        <div className="flex h-10 items-center gap-[7px] border-b border-[#bdbdbd] bg-[#f6f6f6] px-[7px] pb-px text-xs">
            <Picker label="地区" value="烟台" width="w-20" />
            <Picker label="期数" value="2023年三季度" width="w-[100px]" />
            <button className="h-6 w-[65px] bg-white font-medium text-[#4499ff]">更新时间</button>
            <button className="h-6 w-[65px] bg-white font-medium text-[#4499ff]">本期说明</button>
            <button className="h-6 w-[65px] bg-[#1f84f5] text-white">结算调差</button>
            <button aria-label="锁定" className="ml-auto bg-[#e0e0e0]">
                <svg width="50" height="26" viewBox="0 0 50 26" fill="none" className="block">
                    <path d="M29 0h21v26H20z" fill={BLUE} />
                    <rect x="4" y="12" width="12" height="9" stroke="#111" strokeWidth="1.8" />
                    <path d="M6 12V9q0-4 4-4t4 4v3M10 15v3" stroke="#111" strokeWidth="1.8" />
                    <rect x="36" y="12" width="12" height="9" rx="1" stroke="#fff" strokeWidth="1.8" />
                    <path d="M39 12V9q0-4-3.500-4T32 9M42 15v3" stroke="#fff" strokeWidth="1.8" />
                </svg>
            </button>
            <div className="flex bg-[#e0e0e0]">
                <input aria-label="材料搜索" defaultValue="环氧富锌漆固化剂" className="h-[26px] w-40 pl-[3px] text-xs text-[#222] outline-none" />
                <button aria-label="搜索">
                    <svg width="42" height="26" viewBox="0 0 42 26" fill="none" className="block">
                        <path d="M10 0h32v26H0z" fill={BLUE} />
                        <circle cx="25" cy="13" r="7.5" stroke="#fff" strokeWidth="2" />
                        <path d="M30 18l5 5" stroke="#fff" strokeWidth="2" />
                    </svg>
                </button>
            </div>
        </div>
    );
}

function CategoryTree() {
    const [active, setActive] = useState('主要材料');

    return (
        <div className="w-[330px] shrink-0 bg-[#f4f4f4]">
            <h2 className="flex h-[31px] items-center bg-[#e0e0e0] px-3 text-xs font-bold text-[#222]">所有材料类别</h2>
            <ul className="pt-px text-[13px]">
                {CATEGORIES.map(c => (
                    <li key={c}>
                        <button
                            onClick={() => setActive(c)}
                            className={clsx('flex h-7 items-center gap-1.5 pl-[13px]', active === c ? 'text-[#4499ff]' : 'text-[#333]')}
                        >
                            <PageIcon />
                            {c}
                        </button>
                    </li>
                ))}
            </ul>
        </div>
    );
}

function PriceTable() {
    const cell = 'border-b border-r border-[#e2e2e2] py-0 leading-[17px]';

    return (
        <div className="flex min-w-0 flex-1 flex-col border-b border-r border-[#bdbdbd]">
            <div className="flex h-[23px] shrink-0 border-b border-[#c6c6c6] bg-[#f1f1f1] text-xs">
                <button className="w-[91px] border-r border-[#bbb] bg-[#e3efff] font-medium text-[#4499ff]">显示本期价格</button>
                <button className="w-[91px] border-r border-[#bbb] bg-[#f7f7f7] text-[#222]">显示平均价</button>
            </div>
            <div className="flex min-h-0 flex-1">
                <div className="min-w-0 flex-1 overflow-hidden">
                    <table className="w-full table-fixed border-separate border-spacing-0 border-l border-[#e2e2e2] text-xs text-[#222]">
                        <colgroup>
                            {PRICE_COLUMNS.map(c => (
                                <col key={c.title} style={{ width: c.width }} />
                            ))}
                            <col />
                        </colgroup>
                        <thead>
                            <tr className="h-[25px]">
                                {PRICE_COLUMNS.map(c => (
                                    <th key={c.title} className="border-b border-r border-[#c6c6c6] bg-[#e0e0e0] p-0 font-normal">{c.title}</th>
                                ))}
                                <th className="bg-[#efefef] p-0" />
                            </tr>
                        </thead>
                        <tbody>
                            {PRICE_ROWS.map(r => (
                                <tr key={r.id} className={r.name.length > 11 ? 'h-[37px]' : 'h-[30px]'}>
                                    <td className={cell}>
                                        <span className="flex items-center gap-[9px] pl-0.5 text-black">
                                            <InfoBadge />
                                            {r.id}
                                        </span>
                                    </td>
                                    <td className={clsx(cell, 'pl-[3px] pr-1')}>{r.name}</td>
                                    <td className={clsx(cell, 'px-[3px]')}>{r.spec}</td>
                                    <td className={clsx(cell, 'px-0 text-center')}>{r.unit}</td>
                                    <td className={clsx(cell, 'px-0 text-center')}>{r.price}</td>
                                    <td className={clsx(cell, 'px-0 text-center')}>{r.tax}</td>
                                    <td className={clsx(cell, 'px-0')}><TrendIcon /></td>
                                    <td className={clsx(cell, 'px-0 text-center')}>2023-09-15</td>
                                    <td className={cell} />
                                    <td className="p-0" />
                                </tr>
                            ))}
                        </tbody>
                    </table>
                </div>
                <div className="flex w-2.5 justify-center pt-[124px]">
                    <span className="h-8 w-2 rounded-full bg-[#c0c0c0]" />
                </div>
            </div>
        </div>
    );
}

/* Red pointers drawn over the window */
function Pointers() {
    return (
        <svg width="1860" height="1012" viewBox="0 0 1860 1012" fill="#fc3b3a" className="pointer-events-none absolute left-0 top-0">
            <path d="M367 86l18-18 5 6L538 18 394 80l6 8z" />
            <path d="M258 585l9-24 6 3L375 462 465 371 384 462 277 570l5 6z" />
            <path d="M614 727l11-23 6 4L878 526 635 717l5 4z" />
            <path d="M1725 500l-1-26 7 3 61-124-53 128 5 2z" />
        </svg>
    );
}

export default function App() {
    return (
        <div className="relative flex h-screen flex-col overflow-hidden bg-white font-['Noto_Sans','Noto_Sans_CJK_SC',sans-serif]">
            <header className="shrink-0">
                <div className="border-b border-[#d5d5d5] bg-linear-to-b from-white to-[#f2f2f2]">
                    <TitleBar />
                    <MenuBar />
                </div>
                <Ribbon />
            </header>

            <div className="flex min-h-0 flex-1">
                <Sidebar />
                <main className="flex min-w-0 flex-1 flex-col">
                    <PageTabs />
                    <div className="flex min-h-0 flex-1">
                        {/* Collapsed panel */}
                        <div className="flex w-7 shrink-0 flex-col items-center border-l-2 border-r border-l-[#f4f4f4] border-r-[#dcdcdc] bg-white pr-px pt-[9px]">
                            <button aria-label="展开" className="flex size-[15px] items-center justify-center rounded-xs border border-[#aaa] bg-[#ececec]">
                                <svg width="9" height="7" viewBox="0 0 9 7" fill="none" stroke="#555" strokeWidth="1.1"><path d="M1 .5l3 3-3 3M5 .5l3 3-3 3" /></svg>
                            </button>
                            <span className="mt-2 w-3 break-all text-xs font-bold leading-[14px] text-black">人材机汇总</span>
                        </div>
                        <div className="flex min-w-0 flex-1 flex-col">
                            <SummaryTable />
                            <div className="flex h-[29px] shrink-0 items-end bg-[#f5f5f5] pl-2">
                                <button className="h-6 w-[108px] rounded-t-xs bg-[#4499ff] pr-1 text-xs font-medium text-white">广材信息服务</button>
                            </div>
                            <AssistantBar />
                            <FilterBar />
                            <div className="mb-[30px] flex min-h-0 flex-1">
                                <CategoryTree />
                                <div className="flex w-[11px] shrink-0 flex-col bg-[#c6c5c4] pt-48">
                                    <button aria-label="收起" className="flex h-[52px] w-2.5 items-center justify-center bg-[#ff9233]">
                                        <svg width="5" height="9" viewBox="0 0 5 9"><path d="M5 0v9L0 4.500z" fill="#fff" /></svg>
                                    </button>
                                </div>
                                <PriceTable />
                            </div>
                        </div>
                    </div>
                </main>
            </div>
            <footer className="h-1 shrink-0 border-t border-[#d5d5d5] bg-[#f4f4f4]" />

            <Pointers />
        </div>
    );
}
